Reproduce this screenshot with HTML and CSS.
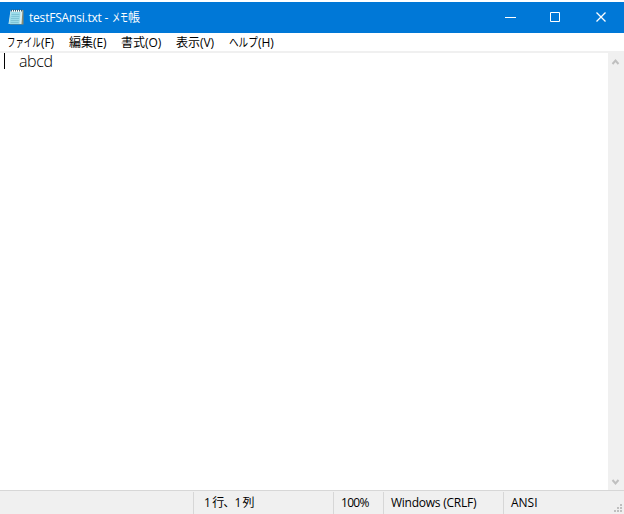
FILE: index.html
```html
<!DOCTYPE html>
<html lang="ja">
<head>
<meta charset="utf-8">
<title>testFSAnsi.txt - メモ帳</title>
<link rel="stylesheet" href="styles.css">
</head>
<body>
<div class="window">
  <header class="titlebar">
    <svg class="app-icon" width="16" height="17" viewBox="0 0 16 17">
      <path d="M3 1h12.500v14.500H2z" fill="#8b8a70"/>
      <path d="M2.500 1.500h12L13.500 15H0.500z" fill="#d9eef0"/>
      <path d="M3 2h9.500l-1 13H1z" fill="#9cdcea"/>
      <path d="M3.500 5.500h8M3.300 7.500h8M3 9.500h8M2.800 11.500h8M2.600 13.500h8" stroke="#79bed1" stroke-width="0.800" fill="none"/>
      <path d="M3 2h11" stroke="#eefafa" stroke-width="2" fill="none"/>
      <path d="M3 1.500h11" stroke="#3f5e70" stroke-width="2" stroke-dasharray="1 1" fill="none"/>
    </svg>
    <h1 class="title"><span class="filename">testFSAnsi.txt - </span><span class="kana memo">メモ</span><span>帳</span></h1>
    <div class="controls">
      <svg width="46" height="31" viewBox="0 0 46 31"><path d="M21 15.500h11" stroke="#fff"/></svg>
      <svg width="46" height="31" viewBox="0 0 46 31"><path d="M20.500 10.500h9v9h-9z" stroke="#fff" fill="none"/></svg>
      <svg width="46" height="31" viewBox="0 0 46 31"><path d="M20.500 10.500l9 9m0-9l-9 9" stroke="#fff" stroke-width="1.300"/></svg>
    </div>
  </header>
  <nav class="menu">
    <span class="item file"><span class="kana file-kana">ファイル</span><span class="key">(F)</span></span>
    <span class="item edit">編集<span class="key">(E)</span></span>
    <span class="item format">書式<span class="key">(O)</span></span>
    <span class="item view">表示<span class="key">(V)</span></span>
    <span class="item help"><span class="kana help-kana">ヘルプ</span><span class="key">(H)</span></span>
  </nav>
  <main class="editor">
    <div class="text"><span class="caret"></span><span class="content">abcd</span></div>
    <div class="scrollbar">
      <svg width="16" height="16" viewBox="0 0 16 16"><path d="M4.500 11L7.500 7.500l3 3.500" stroke="#bfbfbf" stroke-width="2" fill="none"/></svg>
      <svg width="16" height="16" viewBox="0 0 16 16"><path d="M4.500 6L7.500 9.500l3-3.500" stroke="#bfbfbf" stroke-width="2" fill="none"/></svg>
    </div>
  </main>
  <footer class="status">
    <div class="cell blank"></div>
    <div class="cell position"><span class="pos-text">1 行、1 列</span></div>
    <div class="cell zoom"><span class="zoom-text">100%</span></div>
    <div class="cell ending"><span class="ending-text">Windows (CRLF)</span></div>
    <div class="cell encoding"><span>ANSI</span></div>
    <svg class="grip" width="10" height="10" viewBox="0 0 10 10" fill="#bfbfbf"><path d="M7 1h2v2H7zM4 4h2v2H4zM7 4h2v2H7zM1 7h2v2H1zM4 7h2v2H4zM7 7h2v2H7z"/></svg>
  </footer>
</div>
</body>
</html>
```
FILE: styles.css
```css
* { box-sizing: border-box; }
body {
  margin: 0;
  background: #fff;
  color: #000;
  font: 12px/18px "Open Sans", "Noto Sans CJK JP", sans-serif;
}
.window {
  display: flex;
  flex-direction: column;
  height: 514px;
  padding-top: 2px;
  overflow: hidden;
}
.titlebar {
  display: flex;
  align-items: center;
  height: 31px;
  flex: none;
  padding: 0 2px 0 8px;
  background: #0078d7;
  color: #fff;
}
.app-icon { flex: none; }
.title {
  display: flex;
  margin: 0 0 0 5px;
  font-size: 12px;
  font-weight: 400;
  line-height: 18px;
  white-space: pre;
}
.filename { width: 83px; letter-spacing: -0.2px; }
.kana {
  display: inline-block;
  transform-origin: left center;
  white-space: nowrap;
}
.memo { width: 16px; transform: scaleX(0.67); }
.controls { display: flex; margin-left: auto; }
.menu {
  display: flex;
  height: 18px;
  flex: none;
  padding-left: 7px;
}
.item { display: flex; white-space: nowrap; line-height: 19px; }
.key { letter-spacing: -0.1px; }
.file { width: 62px; }
.edit { width: 52px; }
.format { width: 55px; }
.view { width: 53px; }
.file-kana { width: 34px; transform: scaleX(0.7); }
.help-kana { width: 29px; transform: scaleX(0.8); }
.editor {
  display: flex;
  flex: 1;
  min-height: 0;
  border-top: 2px solid #f0f0f0;
}
.text {
  display: flex;
  flex: 1;
  padding-left: 4px;
  font-size: 16px;
  line-height: 17px;
}
.caret { width: 1px; height: 16px; background: #000; }
.content { margin-left: 14px; font-weight: 300; letter-spacing: -0.4px; }
.scrollbar {
  display: flex;
  flex-direction: column;
  justify-content: space-between;
  width: 16px;
  background: #f0f0f0;
}
.status {
  position: relative;
  display: flex;
  height: 24px;
  flex: none;
  padding-top: 1px;
  border-top: 1px solid #d7d7d7;
  background: #f0f0f0;
}
.cell {
  height: 22px;
  padding-left: 7px;
  border-left: 1px solid #d7d7d7;
  line-height: 22px;
  white-space: nowrap;
}
.blank { width: 193px; border: 0; }
.position { width: 140px; padding-left: 10px; }
.zoom { width: 50px; }
.ending { width: 120px; }
.encoding { flex: 1; }
.pos-text { letter-spacing: -0.9px; }
.zoom-text { letter-spacing: -0.7px; }
.ending-text { letter-spacing: -0.25px; }
.grip { position: absolute; right: 1px; bottom: 1px; }
```
